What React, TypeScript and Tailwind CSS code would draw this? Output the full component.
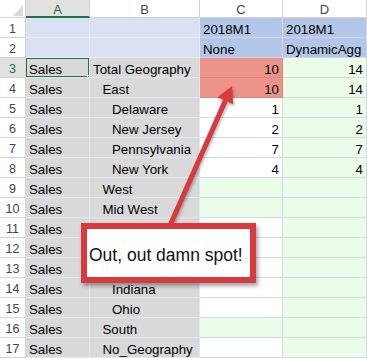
import clsx from "clsx";

type Row = {
    name: string;
    indent: number;
    c?: string;
    d?: string;
    cBg: string;
};

const SALMON = "bg-[#ec9489]";
const GREEN = "bg-[#ebfce8]";
const WHITE = "bg-white";

// rows 11-13 of column B sit under the callout, so they are left blank
const rows: Row[] = [
    { name: "Total Geography", indent: 0, c: "10", d: "14", cBg: SALMON },
    { name: "East", indent: 1, c: "10", d: "14", cBg: SALMON },
    { name: "Delaware", indent: 2, c: "1", d: "1", cBg: WHITE },
    { name: "New Jersey", indent: 2, c: "2", d: "2", cBg: WHITE },
    { name: "Pennsylvania", indent: 2, c: "7", d: "7", cBg: WHITE },
    { name: "New York", indent: 2, c: "4", d: "4", cBg: WHITE },
    { name: "West", indent: 1, cBg: GREEN },
    { name: "Mid West", indent: 1, cBg: GREEN },
    { name: "", indent: 2, cBg: WHITE },
    { name: "", indent: 2, cBg: WHITE },
    { name: "", indent: 2, cBg: WHITE },
    { name: "Indiana", indent: 2, cBg: WHITE },
    { name: "Ohio", indent: 2, cBg: WHITE },
    { name: "South", indent: 1, cBg: GREEN },
    { name: "No_Geography", indent: 1, cBg: WHITE },
];

const indentPad = ["pl-[3px]", "pl-[12.5px]", "pl-[22px]"];

// common cell text styling
const cell = "h-5 leading-[23px] overflow-hidden whitespace-nowrap text-[13.3px] text-black border-r border-b";

function RowHeader({ n, selected }: { n: number; selected?: boolean }) {
    return (
        <div
            className={clsx(
                "h-5 leading-[22px] text-center text-[12.5px] border-r border-b border-[#d4d4d4]",
                selected ? "bg-[#e1e1e1] text-[#217346]" : "bg-white text-[#444]"
            )}
        >
            {n}
        </div>
    );
}

export default function App() {
    return (
        <div
            className="relative w-[367px] h-[358px] overflow-hidden bg-white"
            style={{ fontFamily: '"Liberation Sans", Arial, sans-serif' }}
        >
            <div className="grid grid-cols-[26px_64px_110px_83px_84px]">
                {/* Column headers */}
                <div className="relative h-[18px] bg-white border-r border-b border-[#d4d4d4]">
                    <svg className="absolute left-0 top-0" width="26" height="18">
                        <polygon points="13,16 23,16 23,5" fill="#d9d9d9" />
                    </svg>
                </div>
                <div className="h-[18px] leading-[19px] text-center text-[13px] bg-[#e1e1e1] text-[#217346] border-r border-[#d4d4d4] border-b-2 border-b-[#217346]">
                    A
                </div>
                {["B", "C", "D"].map(l => (
                    <div
                        key={l}
                        className="h-[18px] leading-[19px] text-center text-[13px] bg-white text-[#444] border-r border-b border-[#d4d4d4]"
                    >
                        {l}
                    </div>
                ))}

                {/* Row 1 */}
                <RowHeader n={1} />
                <div className={clsx(cell, "bg-[#d9e1f2] border-[#e6ebf6]")} />
                <div className={clsx(cell, "bg-[#d9e1f2] border-[#e6ebf6]")} />
                <div className={clsx(cell, "bg-[#b4c6e7] border-[#cdd8ee] pl-[3px]")}>2018M1</div>
                <div className={clsx(cell, "bg-[#b4c6e7] border-[#cdd8ee] pl-[3px]")}>2018M1</div>

                {/* Row 2 */}
                <RowHeader n={2} />
                <div className={clsx(cell, "bg-[#d9e1f2] border-[#e6ebf6]")} />
                <div className={clsx(cell, "bg-[#d9e1f2] border-[#e6ebf6]")} />
                <div className={clsx(cell, "bg-[#b4c6e7] border-[#cdd8ee] pl-[3px]")}>None</div>
                <div className={clsx(cell, "bg-[#b4c6e7] border-[#cdd8ee] pl-[3px]")}>DynamicAgg</div>

                {/* Data rows */}
                {rows.map((r, i) => {
                    const n = i + 3;
                    return (
                        <div key={n} className="contents">
                            <RowHeader n={n} selected={n === 3} />
                            <div className={clsx(cell, "relative bg-[#d9d9d9] border-[#e4e7ee] pl-[3px]")}>
                                Sales
                                {n === 3 && (
                                    <>
                                        <div className="absolute -left-px -top-px right-[-1px] bottom-[-1px] border-2 border-[#217346]" />
                                        <div className="absolute right-[-3px] bottom-[-3px] w-[5px] h-[5px] bg-[#217346] border border-white" />
                                    </>
                                )}
                            </div>
                            <div className={clsx(cell, "bg-[#d9d9d9] border-[#e4e7ee]", indentPad[r.indent])}>
                                {r.name}
                            </div>
                            <div
                                className={clsx(
                                    cell,
                                    r.cBg,
                                    r.cBg === SALMON ? "border-[#e0867c]" : "border-[#d4d9e6]",
                                    "text-right pr-[3px]"
                                )}
                            >
                                {r.c}
                            </div>
                            <div className={clsx(cell, GREEN, "border-[#d4d9e6] text-right pr-[3px]")}>
                                {r.d}
                            </div>
                        </div>
                    );
                })}
            </div>

            {/* Arrow */}
            <svg
                className="absolute left-0 top-0 pointer-events-none drop-shadow-[1px_2px_1.5px_rgba(0,0,0,0.3)]"
                width="367"
                height="358"
            >
                <line x1="168" y1="230" x2="225.4" y2="100.6" stroke="#d83a3e" strokeWidth="5" />
                <polygon points="232,86 233.2,104.2 217.6,97.2" fill="#d83a3e" />
            </svg>

            {/* Callout */}
            <div className="absolute left-[81px] top-[223px] w-[175px] h-[60px] bg-white border-[6px] border-[#d83a3e] shadow-[2px_3px_4px_rgba(0,0,0,0.35)] flex items-center pl-[2px] pt-[4px]">
                <span className="text-[17.5px] text-[#111] whitespace-nowrap">Out, out damn spot!</span>
            </div>
        </div>
    );
}
